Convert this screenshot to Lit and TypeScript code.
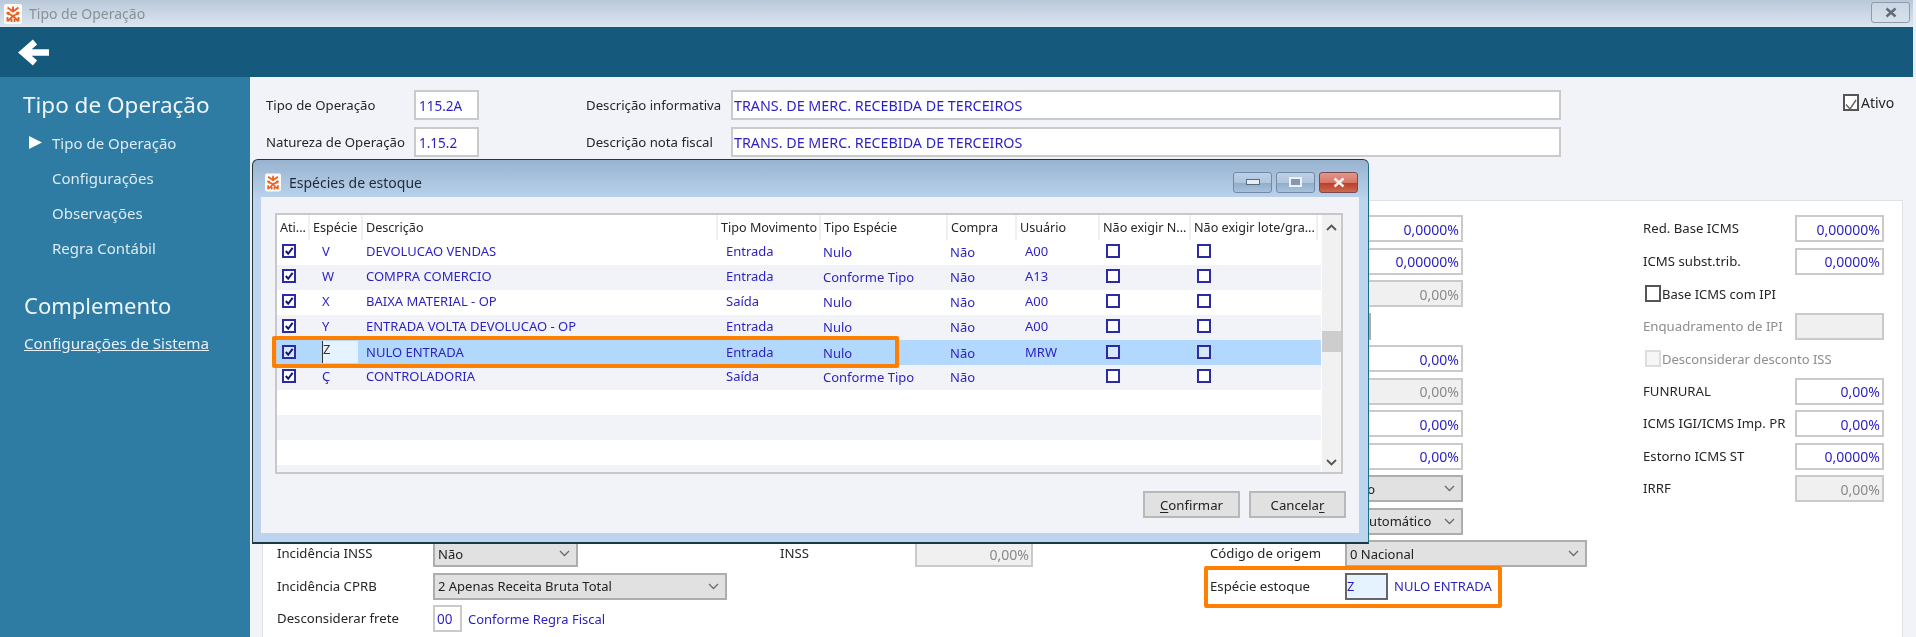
import { LitElement, html, css, svg } from "lit";
import { customElement } from "lit/decorators.js";

const logo = (w: number, h: number) => html`<svg class="logo" width=${w} height=${h} viewBox="0 0 18 20">
  <rect width="18" height="20" rx="2" fill="#fdfbf8"/>
  <path d="M3.500 3.500l5.500 4 5.500-4M9 2.500v5M2.500 8.500L9 12l6.500-3.500M5 8l-1 3M13 8l1 3M9 12l-5 5M9 12l5 5M3.500 13v4.500M14.500 13v4.500M7.500 15v3M10.500 15v3" fill="none" stroke="#ec5f22" stroke-width="1.900"/>
</svg>`;

const tick = svg`<path d="M3 6.5l2.6 3L10.5 3" fill="none" stroke-width="2.2"/>`;

const chevron = html`<svg class="chev" width="11" height="7" viewBox="0 0 11 7"><path d="M1 1l4.500 4.500L10 1" fill="none" stroke="#6a6a6a" stroke-width="1.300"/></svg>`;

type Row = { a: string; d: string; m: string; t: string; c: string; u: string; sel?: boolean; alt?: boolean };
const rows: Row[] = [
  { a: "V", d: "DEVOLUCAO VENDAS", m: "Entrada", t: "Nulo", c: "Não", u: "A00" },
  { a: "W", d: "COMPRA COMERCIO", m: "Entrada", t: "Conforme Tipo", c: "Não", u: "A13", alt: true },
  { a: "X", d: "BAIXA MATERIAL - OP", m: "Saída", t: "Nulo", c: "Não", u: "A00" },
  { a: "Y", d: "ENTRADA VOLTA DEVOLUCAO - OP", m: "Entrada", t: "Nulo", c: "Não", u: "A00", alt: true },
  { a: "Z", d: "NULO ENTRADA", m: "Entrada", t: "Nulo", c: "Não", u: "MRW", sel: true },
  { a: "Ç", d: "CONTROLADORIA", m: "Saída", t: "Conforme Tipo", c: "Não", u: "", alt: true },
];

type F = { k: string; col: string; row: number; t?: string };
const fields: F[] = [
  { k: "in", col: "9", row: 1, t: "0,0000%" },
  { k: "in", col: "9", row: 2, t: "0,00000%" },
  { k: "dis", col: "9", row: 3, t: "0,00%" },
  { k: "stub", col: "9", row: 4 },
  { k: "in", col: "9", row: 5, t: "0,00%" },
  { k: "dis", col: "9", row: 6, t: "0,00%" },
  { k: "in", col: "9", row: 7, t: "0,00%" },
  { k: "in", col: "9", row: 8, t: "0,00%" },
  { k: "sel", col: "9", row: 9, t: "Não" },
  { k: "sel", col: "9", row: 10, t: "1 Automático" },
  { k: "lab", col: "8", row: 11, t: "Código de origem" },
  { k: "sel", col: "9 / 11", row: 11, t: "0 Nacional" },
  { k: "lab", col: "8", row: 12, t: "Espécie estoque" },

  { k: "lab", col: "1", row: 11, t: "Incidência INSS" },
  { k: "sel", col: "2", row: 11, t: "Não" },
  { k: "lab", col: "1", row: 12, t: "Incidência CPRB" },
  { k: "sel", col: "2 / 4", row: 12, t: "2 Apenas Receita Bruta Total" },
  { k: "lab", col: "1", row: 13, t: "Desconsiderar frete" },
  { k: "lab", col: "5", row: 11, t: "INSS" },
  { k: "dis", col: "6", row: 11, t: "0,00%" },

  { k: "lab", col: "12", row: 1, t: "Red. Base ICMS" },
  { k: "in", col: "13", row: 1, t: "0,00000%" },
  { k: "lab", col: "12", row: 2, t: "ICMS subst.trib." },
  { k: "in", col: "13", row: 2, t: "0,0000%" },
  { k: "chk", col: "12 / 14", row: 3, t: "Base ICMS com IPI" },
  { k: "labd", col: "12", row: 4, t: "Enquadramento de IPI" },
  { k: "dis", col: "13", row: 4, t: "" },
  { k: "chkd", col: "12 / 14", row: 5, t: "Desconsiderar desconto ISS" },
  { k: "lab", col: "12", row: 6, t: "FUNRURAL" },
  { k: "in", col: "13", row: 6, t: "0,00%" },
  { k: "lab", col: "12", row: 7, t: "ICMS IGI/ICMS Imp. PR" },
  { k: "in", col: "13", row: 7, t: "0,00%" },
  { k: "lab", col: "12", row: 8, t: "Estorno ICMS ST" },
  { k: "in", col: "13", row: 8, t: "0,0000%" },
  { k: "lab", col: "12", row: 9, t: "IRRF" },
  { k: "dis", col: "13", row: 9, t: "0,00%" },
];

@customElement("app-root")
export class AppRoot extends LitElement {
  static styles = css`
    :host { display: block; position: relative; width: 1916px; height: 637px; overflow: hidden; background: #e9eef4;
      font-family: "Noto Sans", "Liberation Sans", sans-serif; font-size: 13px; color: #262626; filter: blur(0.35px); }
    * { box-sizing: border-box; }
    .titlebar { height: 27px; background: linear-gradient(#b9c8d8, #dce6f1); display: flex; align-items: center; padding-left: 4px; gap: 7px; color: #8b9096; font-size: 14px; width: 1913px; }
    .winclose { margin-left: auto; margin-right: 3px; width: 39px; height: 21px; margin-top: -2px; border: 1px solid #8d9bab; border-radius: 3px; display: flex; align-items: center; justify-content: center; background: linear-gradient(#cbd6e2, #d6e1ec); }
    .header { height: 50px; width: 1913px; background: #155a7c; padding: 12px 0 0 18px; }
    .body { display: flex; height: 560px; width: 1913px; }
    .side { width: 250px; flex: none; background: #2e7ba3; color: #eef5f9; padding: 12px 0 0 23px; }
    .side h1 { margin: 0; font-weight: 400; font-size: 22.5px; line-height: 32px; }
    .side h1.c { margin-top: 23px; padding-left: 1px; font-size: 22px; }
    .items { margin: 5px 0 0; list-style: none; padding: 0; font-size: 15px; }
    .items li { height: 35px; line-height: 35px; padding-left: 29px; position: relative; color: #dcebf3; }
    .tri { position: absolute; left: 6px; top: 10px; }
    .link { display: block; margin: 10px 0 0 1px; font-size: 15.2px; line-height: 24px; text-decoration: underline; color: #e6f0f6; }
    .main { flex: 1; background: #f1f3f8; padding-left: 12px; padding-right: 18px; display: flex; flex-direction: column; }
    .top { height: 123px; padding: 13px 0 0 4px; display: grid; grid-template-columns: 148px 65px 107px 145px 830px 282px 60px; grid-auto-rows: 30px; row-gap: 7px; align-items: center; }
    .ativo { display: flex; align-items: center; gap: 2px; font-size: 14px; margin-top: -6px; grid-column: 7; grid-row: 1; }
    .box { width: 16px; height: 17px; border: 2px solid #555; background: #fff; flex: none; }
    .box.off { border-color: #ddd; background: #f6f6f6; }
    .input { height: 100%; background: #fff; border: 2px solid #cacaca; display: flex; align-items: center; color: #2a1fc0; padding: 1px 3px 0; font-size: 13.5px; }
    .input.wide { font-size: 14.3px; padding-left: 1px; }
    .panel { flex: 1; background: #fff; border: 1px solid #dfe1e5; border-bottom: 0; padding: 14px 0 0 14px; position: relative; display: grid;
      grid-template-columns: 156px 145px 149px 53px 135px 118px 177px 135px 118px 124px 56px 152px 89px;
      grid-auto-rows: 27px; row-gap: 5.5px; align-items: stretch; }
    .num { justify-content: flex-end; padding-right: 2px; font-size: 14px; }
    .dis { background: #f0f0f0; color: #8a8a8a; }
    .sel { background: #e1e1e1; border: 2px solid #adadad; color: #222; display: flex; align-items: center; justify-content: space-between; padding: 0 6px 0 3px; font-size: 13px; }
    .lab { display: flex; align-items: center; font-size: 13.2px; padding-bottom: 1px; }
    .labd { color: #8d8d8d; }
    .check { display: flex; align-items: center; gap: 1px; padding-left: 2px; font-size: 13px; }
    .stub { width: 26px; background: #e1e1e1; border: 2px solid #adadad; }
    .frete { display: flex; align-items: center; gap: 6px; color: #2a1fc0; font-size: 13px; }
    .frete .input { width: 29px; padding: 0 2px; flex: none; }
    .est { display: flex; align-items: center; gap: 6px; color: #2a1fc0; font-size: 13px; }
    .est .z { width: 43px; height: 100%; background: #e5f2ff; border: 2px solid #666; padding-left: 0; display: flex; align-items: center; flex: none; }
    .hl { position: absolute; border: 4px solid #ff8000; border-radius: 2px; pointer-events: none; }
    .hl.a { left: 941px; top: 365px; width: 298px; height: 42px; }
    .hl.b { left: 19px; top: 176px; width: 627px; height: 32px; }

    .dialog { position: absolute; left: 252px; top: 159px; width: 1117px; height: 385px; border: 1px solid #23343f; border-right-color: #1b6f85; border-bottom: 2px solid #1b3a45; border-radius: 6px 6px 0 0;
      background: linear-gradient(#98b3d0 0, #bcd4ed 40px, #bcd4ed 100%); padding: 0 9px 9px 8px; display: flex; flex-direction: column; }
    .dtitle { height: 37px; display: flex; align-items: center; gap: 8px; padding: 8px 0 0 4px; font-size: 14px; color: #1f2a33; }
    .dbtns { margin-left: auto; display: flex; gap: 4px; margin-right: 1px; margin-top: -1px; }
    .wb { width: 39px; height: 21px; border: 1px solid #7389a6; border-radius: 3px; display: flex; align-items: center; justify-content: center; background: linear-gradient(#bcd0e6 0, #b0c6de 50%, #8facc9 52%, #a8c2dc 100%); }
    .wb.x { background: linear-gradient(#e2968a 0, #d87766 50%, #b83e26 52%, #cd6a50 100%); border-color: #7a4a52; }
    .dbody { flex: 1; background: #f1f3f8; padding: 16px 16px 0 14px; display: flex; flex-direction: column; }
    .table { height: 261px; width: 1068px; border: 2px solid #c8c8c8; background: #fff; display: flex; overflow: hidden; }
    .tmain { width: 1044px; flex: none; }
    .tr { display: grid; grid-template-columns: 33px 53px 355px 103px 127px 69px 83px 91px 127px 3px; height: 25px; padding-bottom: 4px; align-items: center; color: #2a1fc0; font-size: 13px; }
    .th { height: 25px; padding-bottom: 0; color: #262626; font-size: 12.6px; }
    .th span { height: 25px; line-height: 25px; padding-left: 3px; border-right: 2px solid #eef0f3; white-space: nowrap; overflow: hidden; }
    .alt { background: #f1f3f8; }
    .seltr { background: #b3d8fd; }
    .c0 { padding-left: 5px; display: flex; }
    .c1 { padding-left: 12px; }
    .c2 { padding-left: 3px; }
    .c3 { padding-left: 8px; }
    .c4 { padding-left: 2px; padding-top: 3px; }
    .c5 { padding-left: 2px; padding-top: 3px; }
    .c6 { padding-left: 8px; }
    .c7 { padding-left: 6px; display: flex; }
    .zc { margin-left: 12px; width: 36px; height: 22px; margin-top: 1px; background: #e5f2ff; border-left: 1px solid #333; color: #333; line-height: 16px; }
    .cb { width: 14px; height: 14px; border: 2px solid #2b2ba6; background: #fff; display: flex; }
    .cb svg { stroke: #14147a; }
    .seltr .cb { background: #d6e8fb; }
    .scroll { flex: 1; margin-left: 1px; background: #f1f1f1; display: flex; flex-direction: column; align-items: center; justify-content: space-between; padding: 9px 0 6px; position: relative; }
    .thumb { position: absolute; left: 0; right: 0; top: 116px; height: 21px; background: #cdcdcd; }
    .actions { display: flex; justify-content: flex-end; gap: 9px; margin-top: 17px; margin-right: -3px; }
    .btn { width: 97px; height: 27px; background: #e1e1e1; border: 2px solid #b8b8b8; display: flex; align-items: center; justify-content: center; font-size: 13.2px; color: #222; }
    .btn u { text-underline-offset: 2px; }
    .r2 { grid-row: 2; }
    .r2.a { grid-column: 1; }
    .r2.b { grid-column: 2; }
    .r2.c { grid-column: 4; }
    .r2.d { grid-column: 5; }
  `;

  private cell(f: F) {
    const s = `grid-column:${f.col};grid-row:${f.row}`;
    switch (f.k) {
      case "in": return html`<div class="input num" style=${s}>${f.t}</div>`;
      case "dis": return html`<div class="input num dis" style=${s}>${f.t}</div>`;
      case "sel": return html`<div class="sel" style=${s}><span>${f.t}</span>${chevron}</div>`;
      case "lab": return html`<div class="lab" style=${s}>${f.t}</div>`;
      case "labd": return html`<div class="lab labd" style=${s}>${f.t}</div>`;
      case "chk": return html`<div class="check" style=${s}><span class="box"></span>${f.t}</div>`;
      case "chkd": return html`<div class="check labd" style=${s}><span class="box off"></span>${f.t}</div>`;
      default: return html`<div class="stub" style=${s}></div>`;
    }
  }

  private cb(on: boolean) {
    return html`<span class="cb">${on ? html`<svg width="10" height="10" viewBox="1 1 11 11">${tick}</svg>` : ""}</span>`;
  }

  render() {
    const empties = [false, true, false, true];
    return html`
      <div class="titlebar">${logo(18, 20)}<span>Tipo de Operação</span>
        <div class="winclose"><svg width="14" height="11" viewBox="0 0 14 11"><path d="M2.500 1.500l9 8M11.500 1.500l-9 8" stroke="#5e6b78" stroke-width="2.400" fill="none"/></svg></div>
      </div>
      <div class="header">
        <svg width="31" height="27" viewBox="0 0 31 27"><path d="M31 13.500H7M17 3L5 13.500 17 24" fill="none" stroke="#fff" stroke-width="6.500"/></svg>
      </div>
      <div class="body">
        <nav class="side">
          <h1>Tipo de Operação</h1>
          <ul class="items">
            <li><svg class="tri" width="13" height="13" viewBox="0 0 13 13"><path d="M0 0l13 6.500L0 13z" fill="#fff"/></svg>Tipo de Operação</li>
            <li>Configurações</li><li>Observações</li><li>Regra Contábil</li>
          </ul>
          <h1 class="c">Complemento</h1>
          <a class="link">Configurações de Sistema</a>
        </nav>
        <div class="main">
          <div class="top">
            <div class="lab">Tipo de Operação</div>
            <div class="input">115.2A</div>
            <div></div>
            <div class="lab">Descrição informativa</div>
            <div class="input wide">TRANS. DE MERC. RECEBIDA DE TERCEIROS</div>
            <div class="ativo"><span class="box"><svg width="12" height="13" viewBox="0 0 12 13"><path d="M1 6.500l4 4.500L11 2" fill="none" stroke="#666" stroke-width="1.400"/></svg></span>Ativo</div>
            <div class="lab r2 a">Natureza de Operação</div>
            <div class="input r2 b">1.15.2</div>
            <div class="lab r2 c">Descrição nota fiscal</div>
            <div class="input wide r2 d">TRANS. DE MERC. RECEBIDA DE TERCEIROS</div>
          </div>
          <section class="panel">
            ${fields.map((f) => this.cell(f))}
            <div class="frete" style="grid-column:2 / 4;grid-row:13"><div class="input">00</div>Conforme Regra Fiscal</div>
            <div class="est" style="grid-column:9 / 11;grid-row:12"><div class="z">Z</div>NULO ENTRADA</div>
            <div class="hl a"></div>
          </section>
        </div>
      </div>

      <div class="dialog">
        <div class="dtitle">${logo(16, 19)}<span>Espécies de estoque</span>
          <div class="dbtns">
            <div class="wb"><svg width="14" height="6" viewBox="0 0 14 6"><rect x=".5" y=".5" width="13" height="5" fill="#e8edf3" stroke="#5a6b80"/></svg></div>
            <div class="wb"><svg width="13" height="10" viewBox="0 0 13 10"><rect x="1" y="1" width="11" height="8" fill="#8298b3" stroke="#eef2f6" stroke-width="2"/></svg></div>
            <div class="wb x"><svg width="14" height="11" viewBox="0 0 14 11"><path d="M2.500 1.500l9 8M11.500 1.500l-9 8" stroke="#f4f0ee" stroke-width="2.600" fill="none"/></svg></div>
          </div>
        </div>
        <div class="dbody">
          <div class="table">
            <div class="tmain">
              <div class="tr th">
                <span>Ati...</span><span>Espécie</span><span>Descrição</span><span>Tipo Movimento</span><span>Tipo Espécie</span><span>Compra</span><span>Usuário</span><span>Não exigir N...</span><span>Não exigir lote/gra...</span>
              </div>
              ${rows.map((r) => html`
                <div class="tr ${r.alt ? "alt" : ""} ${r.sel ? "seltr" : ""}">
                  <div class="c0">${this.cb(true)}</div>
                  ${r.sel ? html`<div class="zc">Z</div>` : html`<div class="c1">${r.a}</div>`}
                  <div class="c2">${r.d}</div>
                  <div class="c3">${r.m}</div>
                  <div class="c4">${r.t}</div>
                  <div class="c5">${r.c}</div>
                  <div class="c6">${r.u}</div>
                  <div class="c7">${this.cb(false)}</div>
                  <div class="c7">${this.cb(false)}</div>
                  <div></div>
                </div>`)}
              ${empties.map((a) => html`<div class="tr ${a ? "alt" : ""}"></div>`)}
            </div>
            <div class="scroll">
              <svg width="11" height="7" viewBox="0 0 11 7"><path d="M1 6l4.500-4.500L10 6" fill="none" stroke="#555" stroke-width="1.800"/></svg>
              <div class="thumb"></div>
              <svg width="11" height="7" viewBox="0 0 11 7"><path d="M1 1l4.500 4.500L10 1" fill="none" stroke="#555" stroke-width="1.800"/></svg>
            </div>
          </div>
          <div class="actions">
            <div class="btn"><span><u>C</u>onfirmar</span></div>
            <div class="btn"><span>Cancela<u>r</u></span></div>
          </div>
        </div>
        <div class="hl b"></div>
      </div>
    `;
  }
}
